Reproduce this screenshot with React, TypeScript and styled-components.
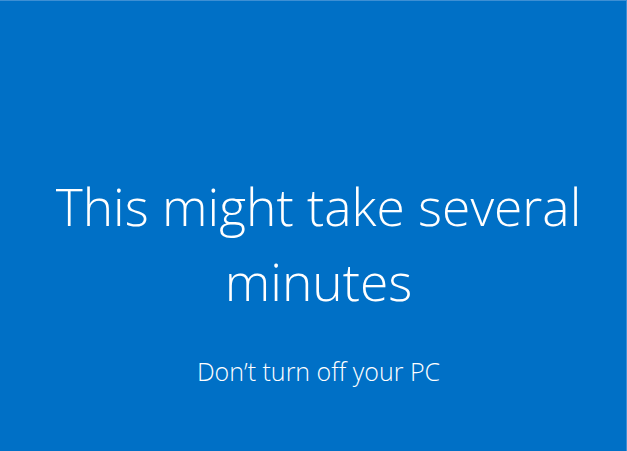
import React from "react";
import styled, { createGlobalStyle } from "styled-components";

const GlobalStyle = createGlobalStyle`
  html, body {
    margin: 0;
    padding: 0;
    background: #0070c6;
  }
  #root {
    height: 100vh;
  }
`;

const Screen = styled.div`
  height: 100%;
  box-sizing: border-box;
  background: #0070c6;
  border-top: 1px solid #3d8fd4;
  border-right: 1px solid #3d8fd4;
  display: flex;
  flex-direction: column;
  align-items: center;
  justify-content: flex-start;
  padding: 168px 0 0 11px;
  color: #fff;
  font-family: "Open Sans", "Noto Sans", sans-serif;
  font-weight: 300;
  text-align: center;
`;

const Title = styled.h1`
  margin: 0;
  font-size: 51.5px;
  font-weight: 300;
  line-height: 75px;
  max-width: 580px;
`;

const Subtitle = styled.p`
  margin: 37px 0 0;
  font-size: 25px;
  font-weight: 300;
  line-height: 30px;
`;

export default function App() {
  return (
    <>
      <GlobalStyle />
      <Screen>
        <Title>This might take several minutes</Title>
        <Subtitle>Don’t turn off your PC</Subtitle>
      </Screen>
    </>
  );
}
